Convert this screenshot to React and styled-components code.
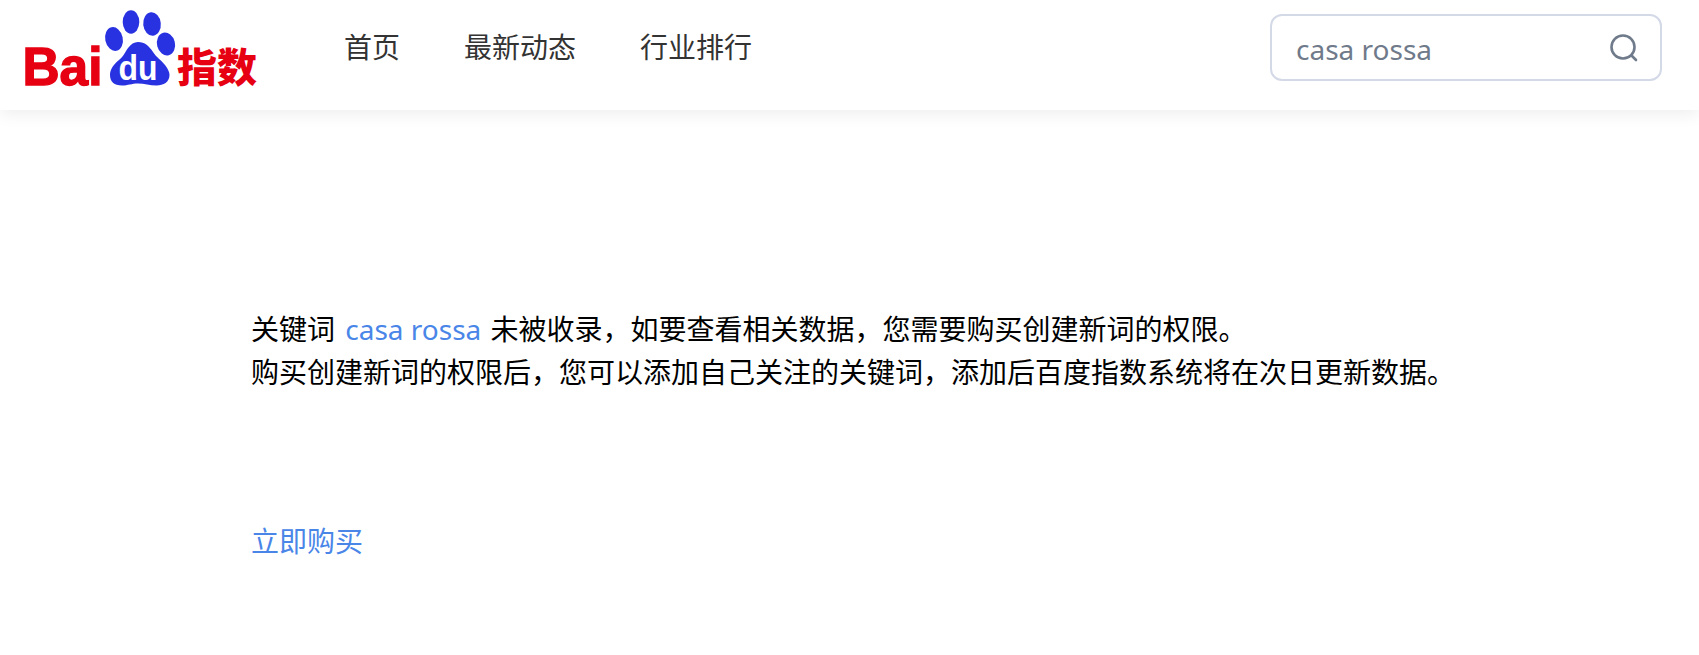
import React from 'react';
import styled, { createGlobalStyle } from 'styled-components';

const GlobalStyle = createGlobalStyle`
  html, body {
    margin: 0;
    padding: 0;
    background: #fff;
  }
  body {
    font-family: "Noto Sans", "Noto Sans CJK SC", sans-serif;
  }
`;

const Page = styled.div`
  width: 1699px;
  height: 655px;
  overflow: hidden;
  background: #fff;
`;

const Header = styled.header`
  height: 110px;
  box-sizing: border-box;
  display: flex;
  align-items: center;
  padding: 0 37px 15px 0;
  background: #fff;
  box-shadow: 0 4px 16px rgba(0, 0, 0, 0.07);
`;

const Logo = styled.svg`
  display: block;
  width: 260px;
  height: 100px;
  flex: none;
  align-self: flex-start;
`;

const Nav = styled.nav`
  display: flex;
  gap: 64px;
  margin: 0 0 2px 84px;
`;

const NavItem = styled.a`
  font-size: 28px;
  line-height: 40px;
  color: #333;
  text-decoration: none;
`;

const SearchBox = styled.div`
  width: 392px;
  height: 67px;
  flex: none;
  box-sizing: border-box;
  margin-left: auto;
  display: flex;
  align-items: center;
  justify-content: space-between;
  padding: 0 21px 0 24px;
  border: 2px solid #d4d9e8;
  border-radius: 12px;
`;

const SearchText = styled.span`
  font-size: 28px;
  color: #6f7a8a;
  margin-top: 2px;
`;

const SearchIcon = styled.svg`
  display: block;
  width: 30px;
  height: 30px;
`;

const Content = styled.main`
  padding: 198px 0 0 251px;
`;

const Message = styled.p`
  margin: 0;
  font-size: 28px;
  line-height: 43px;
  color: #000;
`;

const Highlight = styled.span`
  color: #4a86e8;
  margin: 0 2px 0 3px;
`;

const BuyLink = styled.a`
  display: block;
  margin-top: 125px;
  font-size: 28px;
  line-height: 44px;
  color: #4a86e8;
  text-decoration: none;
`;

const BaiduLogo = () => (
  <Logo viewBox="0 0 260 100">
    <text x="22.500" y="85" fontFamily="Liberation Sans" fontWeight="700" fontSize="54" fill="#e60012" stroke="#e60012" strokeWidth="1.4" textLength="80" lengthAdjust="spacingAndGlyphs">Bai</text>
    <g fill="#2932e1">
      <ellipse cx="114" cy="39" rx="8.8" ry="12" transform="rotate(-12 114 39)" />
      <ellipse cx="131" cy="22" rx="8.3" ry="11.7" />
      <ellipse cx="152" cy="24" rx="8.8" ry="11.7" transform="rotate(-6 152 24)" />
      <ellipse cx="166" cy="44" rx="9" ry="11.5" transform="rotate(-14 166 44)" />
      <path d="M138 42c7 0 11 4 15 10 3 5 8 8 12 13 3 4 4.500 7 4.500 10 0 7-6 10.500-13 10.500-7 0-12-2-18.500-2s-10 2-16 2c-8 0-12-4-12-10.500 0-6 4-11 9-15 5-4 6-8 9-12 3-4 6-6 10-6z" />
    </g>
    <text x="138" y="80" textAnchor="middle" fontFamily="Liberation Sans" fontWeight="700" fontSize="35" fill="#fff" textLength="39" lengthAdjust="spacingAndGlyphs">du</text>
    <text x="177" y="82" fontFamily="'Noto Sans CJK SC'" fontWeight="900" fontSize="40" fill="#e60012" textLength="80" lengthAdjust="spacingAndGlyphs">指数</text>
  </Logo>
);

export default function App() {
  return (
    <Page>
      <GlobalStyle />
      <Header>
        <BaiduLogo />
        <Nav>
          <NavItem>首页</NavItem>
          <NavItem>最新动态</NavItem>
          <NavItem>行业排行</NavItem>
        </Nav>
        <SearchBox>
          <SearchText>casa rossa</SearchText>
          <SearchIcon viewBox="0 0 30 30" fill="none" stroke="#6f7a8a" strokeWidth="2.6" strokeLinecap="round">
            <circle cx="14" cy="14" r="11.5" />
            <path d="M23 23l4 4" />
          </SearchIcon>
        </SearchBox>
      </Header>
      <Content>
        <Message>
          关键词 <Highlight>casa rossa</Highlight> 未被收录，如要查看相关数据，您需要购买创建新词的权限。
          <br />
          购买创建新词的权限后，您可以添加自己关注的关键词，添加后百度指数系统将在次日更新数据。
        </Message>
        <BuyLink>立即购买</BuyLink>
      </Content>
    </Page>
  );
}
